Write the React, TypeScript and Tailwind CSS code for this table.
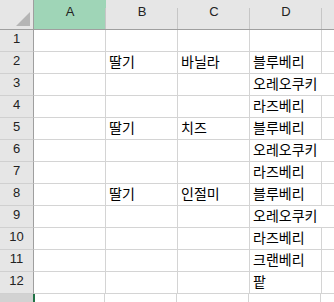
import React from 'react';

// 시트 데이터 (A~D열)
const sheet: string[][] = [
  ['', '', '', ''],
  ['', '딸기', '바닐라', '블루베리'],
  ['', '', '', '오레오쿠키'],
  ['', '', '', '라즈베리'],
  ['', '딸기', '치즈', '블루베리'],
  ['', '', '', '오레오쿠키'],
  ['', '', '', '라즈베리'],
  ['', '딸기', '인절미', '블루베리'],
  ['', '', '', '오레오쿠키'],
  ['', '', '', '라즈베리'],
  ['', '', '', '크랜베리'],
  ['', '', '', '팥'],
];

const columns = ['A', 'B', 'C', 'D'];

const cellFont = { fontFamily: '"Noto Sans CJK KR", "Noto Sans", sans-serif' };
const headFont = { fontFamily: '"Liberation Sans", Arial, sans-serif' };

export default function App() {
  return (
    <div className="w-[334px] h-[302px] overflow-hidden bg-white flex flex-col select-none">
      {/* 열 머리글 */}
      <div className="flex h-[30px] shrink-0 bg-[#e6e6e6] border-b border-[#9f9f9f]" style={headFont}>
        <div className="w-[34px] shrink-0 relative border-r border-[#9f9f9f]">
          <div className="absolute right-[3px] bottom-[3px] w-0 h-0 border-l-[14px] border-l-transparent border-b-[14px] border-b-[#b5b5b5]" />
        </div>
        {columns.map((c, i) => (
          <div
            key={c}
            className={`w-[72px] shrink-0 flex items-end justify-center pb-[8px] text-[13px] text-[#222] relative ${
              i === 0 ? 'bg-[#9fd5b7]' : ''
            }`}
          >
            {c}
            <div className="absolute right-0 top-[8px] bottom-0 w-px bg-[#c6c6c6]" />
          </div>
        ))}
        <div className="flex-1" />
      </div>

      {/* 행 */}
      {sheet.map((row, r) => (
        <div key={r} className="flex h-[22px] shrink-0">
          <div
            className="w-[34px] shrink-0 bg-[#e6e6e6] border-r border-b border-[#9f9f9f] border-b-[#d0d0d0] flex items-end justify-center pb-[3px] text-[13px] text-[#222]"
            style={headFont}
          >
            {r + 1}
          </div>
          {row.map((text, c) => {
            const spills = c === 3 && text.length > 4;
            return (
              <div
                key={c}
                className={`w-[72px] shrink-0 border-b border-[#d4d4d4] flex items-end pl-[3px] pb-[4px] text-[14px] leading-[16px] text-black whitespace-nowrap overflow-visible relative z-10 ${
                  spills ? '' : 'border-r'
                }`}
                style={cellFont}
              >
                {text}
              </div>
            );
          })}
          <div className="flex-1 border-b border-[#d4d4d4]" />
        </div>
      ))}

      {/* 선택된 A13 행 일부 */}
      <div className="flex h-[22px] shrink-0">
        <div className="w-[34px] shrink-0 bg-[#d2d2d2] border-r border-[#9f9f9f] flex items-end justify-center pt-[6px] text-[13px] text-[#222]" style={headFont}>
          13
        </div>
        <div className="w-[72px] shrink-0 border-l-2 border-[#217346] border-r border-r-[#d4d4d4] -ml-px" />
        <div className="w-[72px] shrink-0 border-r border-[#d4d4d4]" />
        <div className="w-[72px] shrink-0 border-r border-[#d4d4d4]" />
        <div className="w-[72px] shrink-0 border-r border-[#d4d4d4]" />
        <div className="flex-1" />
      </div>
    </div>
  );
}
